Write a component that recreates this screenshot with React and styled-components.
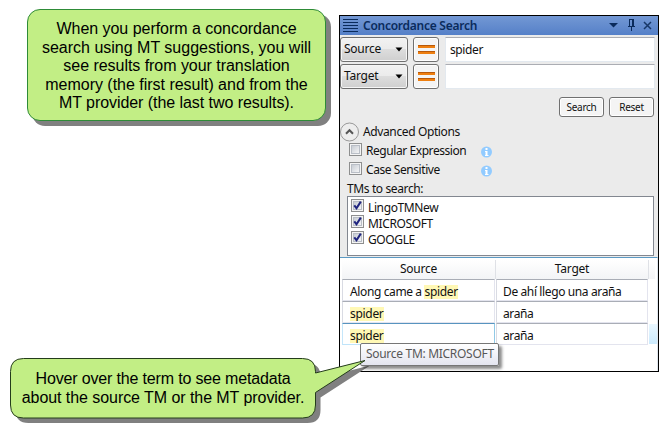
import React from 'react';
import styled, { createGlobalStyle } from 'styled-components';

const Global = createGlobalStyle`
  * { box-sizing: border-box; }
  body { margin: 0; background: #fff; overflow: hidden; }
`;

const Stage = styled.main`
  position: relative;
  display: flex;
  align-items: flex-start;
  width: 659px;
  height: 433px;
  font: 12px/16px "Noto Sans", "Open Sans", sans-serif;
  letter-spacing: -0.38px;
  color: #111;
`;

const Note = styled.aside`
  flex: none;
  width: 299px;
  height: 112px;
  margin: 9px 13px 0 27px;
  padding-top: 10px;
  border: 1px solid #2e8b37;
  border-radius: 13px;
  background: #c2ee85;
  box-shadow: 5px 5px 0 #808080;
  text-align: center;
`;

const NoteLine = styled.div`
  font: 16px/18.5px "Liberation Sans", Arial, sans-serif;
  letter-spacing: ${(p) => p.$track || 0}px;
  white-space: nowrap;
  color: #000;
`;

const Panel = styled.section`
  flex: none;
  display: flex;
  flex-direction: column;
  width: 320px;
  height: 357px;
  margin-top: 15px;
  border: 1px solid #000;
  background: #ebebeb;
`;

const TitleBar = styled.header`
  flex: none;
  display: flex;
  align-items: center;
  height: 19px;
  padding: 0 5px 0 3px;
  background: linear-gradient(#7398d4, #5580c8);
`;

const Title = styled.h1`
  flex: 1;
  margin: 0 0 0 5px;
  font-size: 12px;
  line-height: 17px;
  font-weight: 600;
  letter-spacing: -0.26px;
  color: #0a2b5c;
`;

const Fields = styled.div`
  display: flex;
  flex-direction: column;
  gap: 2px;
  padding: 2px 3px 0 0;
`;

const FieldRow = styled.div`
  display: flex;
  height: 25px;
`;

const Select = styled.div`
  display: flex;
  align-items: center;
  justify-content: space-between;
  width: 68px;
  padding: 0 4px 1px 3px;
  border: 1px solid #707070;
  border-radius: 3px;
  background: linear-gradient(#f2f2f2 0%, #ebebeb 49%, #dddddd 50%, #cfcfcf 100%);
  box-shadow: inset 0 0 0 1px #f6f6f6;
  letter-spacing: -0.25px;
`;

const Equals = styled.div`
  display: flex;
  align-items: center;
  justify-content: center;
  width: 26px;
  margin: 0 6px 0 5px;
  border: 1px solid #707070;
  border-radius: 3px;
  background: #f4f4f4;
  box-shadow: inset 0 0 0 1px #fff;
`;

const Input = styled.div`
  flex: 1;
  padding: 4px;
  border: 1px solid #e3e9ef;
  border-top-color: #abadb3;
  background: #fff;
  line-height: 15px;
`;

const Actions = styled.div`
  display: flex;
  justify-content: flex-end;
  gap: 5px;
  padding: 8px 4px 0 0;
`;

const Button = styled.div`
  width: 45px;
  height: 20px;
  border: 1px solid #707070;
  border-radius: 3px;
  background: #f4f4f4;
  box-shadow: inset 0 0 0 1px #fff;
  font-size: 10px;
  letter-spacing: -0.3px;
  line-height: 19px;
  text-align: center;
`;

const Advanced = styled.div`
  display: flex;
  align-items: center;
  gap: 4px;
  height: 20px;
  margin-top: 5px;
`;

const Option = styled.div`
  display: flex;
  align-items: flex-start;
  height: 19px;
  padding: 1px 0 0 9px;
`;

const OptionLabel = styled.span`
  width: 115px;
  margin-left: 4px;
  white-space: nowrap;
  letter-spacing: -0.43px;
`;

const OptionInfo = styled.span`
  display: flex;
  padding-top: 3px;
`;

const Caption = styled.div`
  height: 16px;
  padding-left: 7px;
  line-height: 18px;
  white-space: nowrap;
`;

const ListBox = styled.div`
  height: 60px;
  margin: 0 4px 0 7px;
  padding: 2px 3px;
  border: 1px solid #828790;
  background: #fff;
`;

const ListItem = styled.div`
  display: flex;
  align-items: flex-start;
  gap: 4px;
  height: 16px;
  line-height: 18px;
  white-space: nowrap;
`;

const Results = styled.div`
  flex: 1;
  margin-top: 1px;
  padding: 2px 2px 0;
  border-top: 1px solid #5c9ac4;
  border-right: 1px solid #dfe6ee;
  background: #fff;
`;

const HeadRow = styled.div`
  display: grid;
  grid-template-columns: 154px 153px 1fr;
  height: 19px;
  background: linear-gradient(#fff, #f3f4f6);
`;

const HeadCell = styled.div`
  border-right: 1px solid #dfe1e6;
  line-height: 18px;
  text-align: center;
  letter-spacing: -0.25px;
`;

const Row = styled.div`
  display: grid;
  grid-template-columns: 153px 152px 8px;
  column-gap: 1px;
  height: 22px;
`;

const Cell = styled.div`
  padding: 4px 0 0 ${(p) => (p.$lead ? 7 : 6)}px;
  border: 1px solid #e3e4ee;
  border-top-color: ${(p) => (p.$active ? '#5794bf' : '#a9adb6')};
  border-left-color: ${(p) => (p.$active ? '#c5e6fa' : '#d9dbe3')};
  border-right-color: ${(p) => (p.$active ? '#91c9e6' : '#e3e4ee')};
  border-bottom-color: ${(p) => (p.$active ? '#bfe4fa' : '#e3e4ee')};
  line-height: 15px;
  white-space: nowrap;
`;

const RowEnd = styled.div`
  margin: 1px 0;
  background: ${(p) => (p.$active ? 'linear-gradient(#e9f7ff, #cbeafd)' : 'transparent')};
`;

const Mark = styled.mark`
  display: inline-block;
  height: 14px;
  line-height: 13px;
  letter-spacing: -0.3px;
  background: #fff8b5;
  color: inherit;
`;

const Tooltip = styled.div`
  position: absolute;
  left: 360px;
  top: 343px;
  width: 139px;
  height: 23px;
  padding-left: 5px;
  border: 1px solid #767676;
  border-radius: 2px;
  background: linear-gradient(#fff, #e4e5f0);
  box-shadow: 3px 3px 3px rgba(0, 0, 0, 0.45);
  color: #575757;
  line-height: 20px;
  letter-spacing: -0.3px;
  white-space: nowrap;
`;

const BubbleLayer = styled.svg`
  position: absolute;
  left: 0;
  top: 340px;
`;

const BubbleText = styled.div`
  position: absolute;
  left: 10px;
  top: 370px;
  width: 306px;
  text-align: center;
`;

const BUBBLE =
  'M23.5 18.5H302.5Q315.5 18.5 315.5 31.5V33L365 20.5L315.5 52.5V65Q315.5 78 302.5 78H23.5Q10.5 78 10.5 65V31.5Q10.5 18.5 23.5 18.5Z';

const Caret = () => (
  <svg width="8" height="5" viewBox="0 0 8 5"><path d="M.5.5h7L4 4.5z" fill="#000" /></svg>
);

const EqualsIcon = () => (
  <svg width="17" height="9" viewBox="0 0 17 9" shapeRendering="crispEdges">
    <path d="M0 0h17v3H0zM0 6h17v3H0z" fill="#ee7f10" />
    <path d="M0 0h17v1H0zM0 6h17v1H0z" fill="#b8590a" />
  </svg>
);

const Check = ({ checked }) => (
  <svg width="13" height="13" viewBox="0 0 13 13">
    <defs>
      <linearGradient id="box" x2="1" y2="1">
        <stop stopColor="#c5cad1" /><stop offset="1" stopColor="#f7f7f8" />
      </linearGradient>
    </defs>
    <rect x=".5" y=".5" width="12" height="12" fill="#f4f4f4" stroke="#8e8f8f" />
    <rect x="2.5" y="2.5" width="8" height="8" fill="url(#box)" stroke="#b9bec6" />
    {checked && <path d="M3.3 6.3L5.5 9.3L9.8 2.6" fill="none" stroke="#20257f" strokeWidth="2" />}
  </svg>
);

const Info = () => (
  <svg width="12" height="12" viewBox="0 0 12 12">
    <circle cx="5.5" cy="6" r="5.5" fill="#92cbff" />
    <path d="M4.5 2h2v2h-2zM4 5h2.5v4h1v1H4V9h.5V6H4z" fill="#fff" />
  </svg>
);

const options = ['Regular Expression', 'Case Sensitive'];
const memories = ['LingoTMNew', 'MICROSOFT', 'GOOGLE'];
const results = [
  { before: 'Along came a ', target: 'De ahí llego una araña' },
  { before: '', target: 'araña' },
  { before: '', target: 'araña', active: true },
];

export default function App() {
  return (
    <Stage>
      <Global />
      <Note>
        <NoteLine $track={-0.03}>When you perform a concordance</NoteLine>
        <NoteLine>search using MT suggestions, you will</NoteLine>
        <NoteLine $track={-0.04}>see results from your translation</NoteLine>
        <NoteLine $track={-0.02}>memory (the first result) and from the</NoteLine>
        <NoteLine $track={-0.06}>MT provider (the last two results).</NoteLine>
      </Note>
      <Panel>
        <TitleBar>
          <svg width="15" height="13" viewBox="0 0 15 13" shapeRendering="crispEdges">
            <path d="M0 .5h15M0 3.5h15M0 6.5h15M0 9.5h15M0 12.5h15" stroke="#0a2b5c" />
          </svg>
          <Title>Concordance Search</Title>
          <svg width="44" height="13" viewBox="0 0 44 13">
            <path d="M0 4h9L4.5 8.5z" fill="#0a2b5c" />
            <path d="M20.5 1v6M24.5 1v6M20 .5h5M19 7.5h7M22.500 8v4M23.5 1v6" fill="none" stroke="#0a2b5c" />
            <path d="M35 3l7 7M42 3l-7 7" stroke="#173767" strokeWidth="1.5" />
          </svg>
        </TitleBar>
        <Fields>
          <FieldRow>
            <Select>Source<Caret /></Select>
            <Equals><EqualsIcon /></Equals>
            <Input>spider</Input>
          </FieldRow>
          <FieldRow>
            <Select>Target<Caret /></Select>
            <Equals><EqualsIcon /></Equals>
            <Input />
          </FieldRow>
        </Fields>
        <Actions>
          <Button>Search</Button>
          <Button>Reset</Button>
        </Actions>
        <Advanced>
          <svg width="19" height="20" viewBox="0 0 19 20">
            <circle cx="9.5" cy="10" r="9" fill="#ededed" stroke="#999" />
            <path d="M6 11.7L9.5 8.2L13 11.7" fill="none" stroke="#555" strokeWidth="2" />
          </svg>
          Advanced Options
        </Advanced>
        {options.map((label) => (
          <Option key={label}>
            <Check />
            <OptionLabel>{label}</OptionLabel>
            <OptionInfo><Info /></OptionInfo>
          </Option>
        ))}
        <Caption>TMs to search:</Caption>
        <ListBox>
          {memories.map((m) => (
            <ListItem key={m}><Check checked />{m}</ListItem>
          ))}
        </ListBox>
        <Results>
          <HeadRow>
            <HeadCell>Source</HeadCell>
            <HeadCell>Target</HeadCell>
          </HeadRow>
          {results.map((r, i) => (
            <Row key={i}>
              <Cell $lead $active={r.active}>{r.before}<Mark>spider</Mark></Cell>
              <Cell>{r.target}</Cell>
              <RowEnd $active={r.active} />
            </Row>
          ))}
        </Results>
      </Panel>
      <BubbleLayer width="380" height="93" viewBox="0 0 380 93">
        <path d={BUBBLE} transform="translate(5 5)" fill="#808080" />
      </BubbleLayer>
      <Tooltip>Source TM: MICROSOFT</Tooltip>
      <BubbleLayer width="380" height="93" viewBox="0 0 380 93">
        <path d={BUBBLE} fill="#c2ee85" stroke="#243c1b" />
      </BubbleLayer>
      <BubbleText>
        <NoteLine $track={-0.16}>Hover over the term to see metadata</NoteLine>
        <NoteLine $track={-0.06}>about the source TM or the MT provider.</NoteLine>
      </BubbleText>
    </Stage>
  );
}
